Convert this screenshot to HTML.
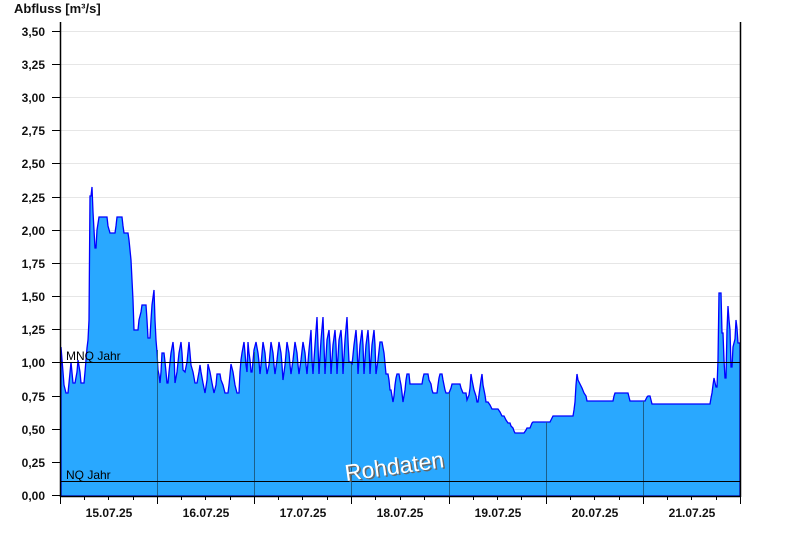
<!DOCTYPE html>
<html><head><meta charset="utf-8"><style>
body{margin:0;background:#fff;width:800px;height:550px;overflow:hidden}
svg{display:block;font-family:"Liberation Sans",Arial,sans-serif}
</style></head><body>
<svg width="800" height="550" viewBox="0 0 800 550">
<text x="14" y="13" font-size="13" font-weight="bold" fill="#111">Abfluss [m³/s]</text>
<g stroke="#e6e6e6" stroke-width="1">
<line x1="60" x2="740" y1="31.5" y2="31.5"/><line x1="60" x2="740" y1="64.5" y2="64.5"/><line x1="60" x2="740" y1="97.5" y2="97.5"/><line x1="60" x2="740" y1="130.5" y2="130.5"/><line x1="60" x2="740" y1="163.5" y2="163.5"/><line x1="60" x2="740" y1="197.5" y2="197.5"/><line x1="60" x2="740" y1="230.5" y2="230.5"/><line x1="60" x2="740" y1="263.5" y2="263.5"/><line x1="60" x2="740" y1="296.5" y2="296.5"/><line x1="60" x2="740" y1="329.5" y2="329.5"/><line x1="60" x2="740" y1="396.5" y2="396.5"/><line x1="60" x2="740" y1="429.5" y2="429.5"/><line x1="60" x2="740" y1="462.5" y2="462.5"/>
</g>
<path fill="#29a8ff" stroke="#0000ff" stroke-width="1.3" stroke-linejoin="miter" d="M61,496 L61,347 L63,372 L64,385 L66,393 L68,393 L69,383 L71,362 L73,383 L75,383 L77,372 L78,360 L80,372 L81,383 L84,383 L85,372 L87,348 L88,340 L89,320 L90,196 L91,196 L92,187 L93,212 L94,230 L95,248 L96,248 L97,230 L99,217 L107,217 L108,226 L110,233 L115,233 L116,226 L117,217 L122,217 L123,226 L124,233 L128,233 L129,240 L130,250 L131,260 L132,280 L133,300 L134,330 L138,330 L139,320 L141,312 L142,305 L146,305 L147,320 L148,338 L150,338 L151,320 L152,305 L154,290 L155,320 L156,340 L157,352 L158,370 L159,375 L160,383 L161,372 L162,353 L164,353 L165,362 L166,372 L167,383 L168,383 L169,372 L171,353 L173,342 L174,353 L175,383 L177,372 L179,353 L181,342 L182,353 L183,370 L185,372 L187,362 L189,342 L190,353 L191,365 L193,372 L195,383 L197,383 L199,372 L200,365 L201,372 L203,383 L205,393 L207,380 L208,364 L210,372 L212,383 L214,393 L216,385 L217,374 L220,374 L221,380 L223,385 L225,393 L228,393 L229,385 L231,364 L233,372 L235,385 L237,393 L239,393 L240,372 L241,360 L242,353 L244,342 L245,353 L246,365 L247,372 L248,342 L249,353 L250,360 L251,372 L252,372 L254,350 L256,342 L258,353 L259,362 L260,374 L261,365 L263,342 L265,353 L266,365 L267,374 L269,365 L271,342 L273,353 L274,365 L275,374 L277,360 L279,342 L281,353 L282,365 L283,380 L285,365 L287,342 L289,353 L290,365 L291,374 L293,360 L295,342 L297,353 L298,365 L299,374 L301,360 L303,342 L305,353 L306,365 L307,374 L309,350 L311,330 L312,360 L313,374 L315,345 L317,317 L318,345 L319,374 L321,340 L323,317 L324,345 L325,374 L327,340 L329,330 L330,345 L331,374 L333,345 L335,330 L336,345 L337,374 L339,340 L341,330 L342,345 L343,374 L345,340 L347,317 L348,340 L349,362 L351,362 L352,365 L354,345 L356,330 L357,345 L358,374 L360,345 L362,330 L363,345 L364,374 L366,345 L368,330 L369,345 L370,374 L372,345 L374,330 L375,345 L376,374 L378,360 L380,342 L382,342 L384,353 L386,374 L388,374 L389,380 L390,390 L391,390 L392,396 L393,402 L394,396 L395,385 L396,378 L397,374 L399,374 L400,380 L401,385 L402,393 L403,402 L405,390 L406,380 L407,374 L409,374 L410,384 L422,384 L423,378 L424,374 L428,374 L429,380 L431,384 L432,390 L433,393 L437,393 L438,385 L439,378 L440,374 L442,374 L443,380 L445,390 L446,393 L449,393 L451,388 L452,384 L460,384 L461,388 L463,393 L466,393 L467,400 L469,395 L470,388 L471,374 L472,380 L474,390 L476,396 L477,402 L478,402 L479,395 L481,380 L482,374 L483,385 L485,395 L486,402 L488,402 L490,405 L492,409 L498,409 L500,412 L502,416 L504,416 L506,420 L508,423 L510,423 L511,426 L513,428 L514,431 L515,433 L524,433 L526,430 L527,428 L530,428 L532,423 L533,422 L550,422 L552,418 L553,416 L573,416 L574,410 L575,402 L576,385 L577,374 L578,380 L580,384 L582,388 L584,393 L586,396 L587,401 L613,401 L614,396 L615,393 L628,393 L629,397 L630,401 L645,401 L647,397 L648,396 L650,396 L651,400 L652,404 L710,404 L711,398 L712,393 L713,385 L714,378 L716,387 L717,387 L718,360 L719,293 L721,293 L722,333 L723,333 L724,360 L725,378 L726,378 L727,330 L728,306 L729,320 L730,330 L731,367 L732,367 L733,347 L735,339 L736,320 L737,328 L738,343 L740,343 L740,496 Z"/>
<g stroke="#1c5f8a" stroke-width="1">
<line x1="157.5" x2="157.5" y1="350" y2="496"/><line x1="254.5" x2="254.5" y1="352" y2="496"/><line x1="351.5" x2="351.5" y1="364" y2="496"/><line x1="449.5" x2="449.5" y1="393" y2="496"/><line x1="546.5" x2="546.5" y1="422" y2="496"/><line x1="643.5" x2="643.5" y1="401" y2="496"/>
</g>
<line x1="60" x2="740" y1="362.5" y2="362.5" stroke="#000"/>
<line x1="60" x2="740" y1="481.5" y2="481.5" stroke="#000"/>
<text x="66" y="360" font-size="12" fill="#000">MNQ Jahr</text>
<text x="66" y="479" font-size="12" fill="#000">NQ Jahr</text>
<g transform="translate(346,481) rotate(-8)">
<text x="1.5" y="1.5" font-size="23" fill="#666">Rohdaten</text>
<text x="0" y="0" font-size="23" fill="#fff">Rohdaten</text>
</g>
<g stroke="#000" stroke-width="1.5">
<line x1="60.5" x2="60.5" y1="22" y2="497"/>
<line x1="740.5" x2="740.5" y1="22" y2="497"/>
<line x1="60" x2="741" y1="496.5" y2="496.5"/>
</g>
<g stroke="#000" stroke-width="1">
<line x1="52" x2="60" y1="31.5" y2="31.5"/><line x1="52" x2="60" y1="64.5" y2="64.5"/><line x1="52" x2="60" y1="97.5" y2="97.5"/><line x1="52" x2="60" y1="130.5" y2="130.5"/><line x1="52" x2="60" y1="163.5" y2="163.5"/><line x1="52" x2="60" y1="197.5" y2="197.5"/><line x1="52" x2="60" y1="230.5" y2="230.5"/><line x1="52" x2="60" y1="263.5" y2="263.5"/><line x1="52" x2="60" y1="296.5" y2="296.5"/><line x1="52" x2="60" y1="329.5" y2="329.5"/><line x1="52" x2="60" y1="362.5" y2="362.5"/><line x1="52" x2="60" y1="396.5" y2="396.5"/><line x1="52" x2="60" y1="429.5" y2="429.5"/><line x1="52" x2="60" y1="462.5" y2="462.5"/><line x1="52" x2="60" y1="495.5" y2="495.5"/>
<line x1="60.5" x2="60.5" y1="496" y2="504"/><line x1="157.5" x2="157.5" y1="496" y2="504"/><line x1="254.5" x2="254.5" y1="496" y2="504"/><line x1="351.5" x2="351.5" y1="496" y2="504"/><line x1="449.5" x2="449.5" y1="496" y2="504"/><line x1="546.5" x2="546.5" y1="496" y2="504"/><line x1="643.5" x2="643.5" y1="496" y2="504"/><line x1="740.5" x2="740.5" y1="496" y2="504"/>
<line x1="84.5" x2="84.5" y1="496" y2="500"/><line x1="108.5" x2="108.5" y1="496" y2="500"/><line x1="133.5" x2="133.5" y1="496" y2="500"/>
<line x1="181.5" x2="181.5" y1="496" y2="500"/><line x1="205.5" x2="205.5" y1="496" y2="500"/><line x1="230.5" x2="230.5" y1="496" y2="500"/>
<line x1="278.5" x2="278.5" y1="496" y2="500"/><line x1="302.5" x2="302.5" y1="496" y2="500"/><line x1="327.5" x2="327.5" y1="496" y2="500"/>
<line x1="375.5" x2="375.5" y1="496" y2="500"/><line x1="400.5" x2="400.5" y1="496" y2="500"/><line x1="424.5" x2="424.5" y1="496" y2="500"/>
<line x1="473.5" x2="473.5" y1="496" y2="500"/><line x1="497.5" x2="497.5" y1="496" y2="500"/><line x1="521.5" x2="521.5" y1="496" y2="500"/>
<line x1="570.5" x2="570.5" y1="496" y2="500"/><line x1="594.5" x2="594.5" y1="496" y2="500"/><line x1="619.5" x2="619.5" y1="496" y2="500"/>
<line x1="667.5" x2="667.5" y1="496" y2="500"/><line x1="691.5" x2="691.5" y1="496" y2="500"/><line x1="716.5" x2="716.5" y1="496" y2="500"/>
</g>
<g font-size="12" font-weight="bold" fill="#111" text-anchor="end">
<text x="45" y="36">3,50</text><text x="45" y="69">3,25</text><text x="45" y="102">3,00</text><text x="45" y="135">2,75</text><text x="45" y="168">2,50</text><text x="45" y="202">2,25</text><text x="45" y="235">2,00</text><text x="45" y="268">1,75</text><text x="45" y="301">1,50</text><text x="45" y="334">1,25</text><text x="45" y="367">1,00</text><text x="45" y="401">0,75</text><text x="45" y="434">0,50</text><text x="45" y="467">0,25</text><text x="45" y="500">0,00</text>
</g>
<g font-size="12" font-weight="bold" fill="#111" text-anchor="middle">
<text x="109" y="517">15.07.25</text><text x="206" y="517">16.07.25</text><text x="303" y="517">17.07.25</text><text x="400" y="517">18.07.25</text><text x="498" y="517">19.07.25</text><text x="595" y="517">20.07.25</text><text x="692" y="517">21.07.25</text>
</g>
</svg>
</body></html>
